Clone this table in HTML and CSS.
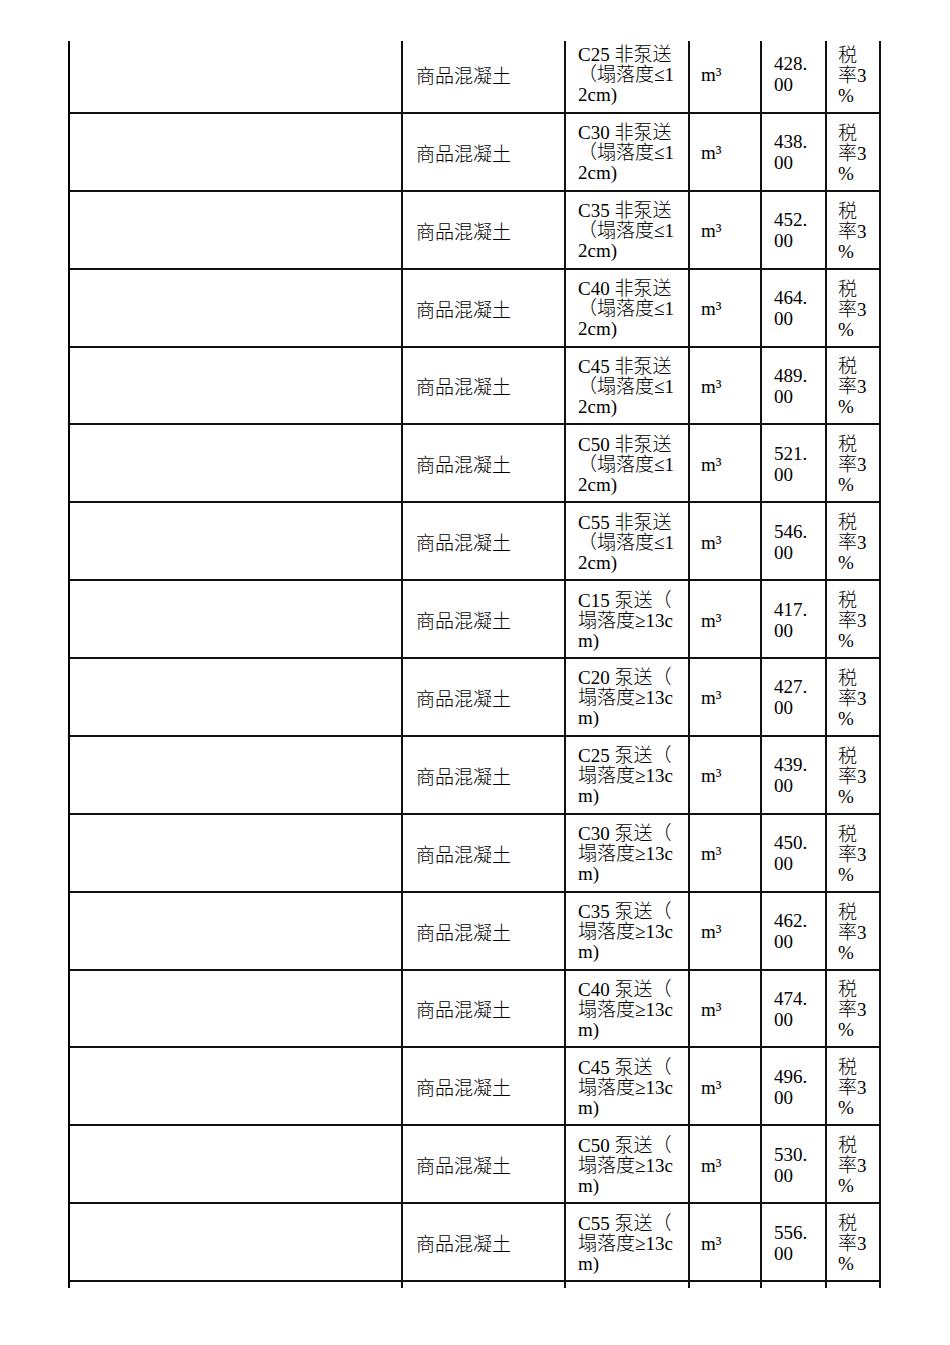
FILE: index.html
```html
<!DOCTYPE html>
<html lang="zh">
<head>
<meta charset="utf-8">
<title>商品混凝土</title>
<link rel="stylesheet" href="styles.css">
</head>
<body>
<div class="page">
  <div class="clip">
    <div class="grid">
      <div class="c c1"></div><div class="c c2">商品混凝土</div><div class="c c3"><div>C25 非泵送<br>（塌落度≤1<br>2cm)</div></div><div class="c c4">m³</div><div class="c c5"><div>428.<br>00</div></div><div class="c c6"><div>税<br>率3<br>%</div></div>
      <div class="c c1"></div><div class="c c2">商品混凝土</div><div class="c c3"><div>C30 非泵送<br>（塌落度≤1<br>2cm)</div></div><div class="c c4">m³</div><div class="c c5"><div>438.<br>00</div></div><div class="c c6"><div>税<br>率3<br>%</div></div>
      <div class="c c1"></div><div class="c c2">商品混凝土</div><div class="c c3"><div>C35 非泵送<br>（塌落度≤1<br>2cm)</div></div><div class="c c4">m³</div><div class="c c5"><div>452.<br>00</div></div><div class="c c6"><div>税<br>率3<br>%</div></div>
      <div class="c c1"></div><div class="c c2">商品混凝土</div><div class="c c3"><div>C40 非泵送<br>（塌落度≤1<br>2cm)</div></div><div class="c c4">m³</div><div class="c c5"><div>464.<br>00</div></div><div class="c c6"><div>税<br>率3<br>%</div></div>
      <div class="c c1"></div><div class="c c2">商品混凝土</div><div class="c c3"><div>C45 非泵送<br>（塌落度≤1<br>2cm)</div></div><div class="c c4">m³</div><div class="c c5"><div>489.<br>00</div></div><div class="c c6"><div>税<br>率3<br>%</div></div>
      <div class="c c1"></div><div class="c c2">商品混凝土</div><div class="c c3"><div>C50 非泵送<br>（塌落度≤1<br>2cm)</div></div><div class="c c4">m³</div><div class="c c5"><div>521.<br>00</div></div><div class="c c6"><div>税<br>率3<br>%</div></div>
      <div class="c c1"></div><div class="c c2">商品混凝土</div><div class="c c3"><div>C55 非泵送<br>（塌落度≤1<br>2cm)</div></div><div class="c c4">m³</div><div class="c c5"><div>546.<br>00</div></div><div class="c c6"><div>税<br>率3<br>%</div></div>
      <div class="c c1"></div><div class="c c2">商品混凝土</div><div class="c c3"><div>C15 泵送（<br>塌落度≥13c<br>m)</div></div><div class="c c4">m³</div><div class="c c5"><div>417.<br>00</div></div><div class="c c6"><div>税<br>率3<br>%</div></div>
      <div class="c c1"></div><div class="c c2">商品混凝土</div><div class="c c3"><div>C20 泵送（<br>塌落度≥13c<br>m)</div></div><div class="c c4">m³</div><div class="c c5"><div>427.<br>00</div></div><div class="c c6"><div>税<br>率3<br>%</div></div>
      <div class="c c1"></div><div class="c c2">商品混凝土</div><div class="c c3"><div>C25 泵送（<br>塌落度≥13c<br>m)</div></div><div class="c c4">m³</div><div class="c c5"><div>439.<br>00</div></div><div class="c c6"><div>税<br>率3<br>%</div></div>
      <div class="c c1"></div><div class="c c2">商品混凝土</div><div class="c c3"><div>C30 泵送（<br>塌落度≥13c<br>m)</div></div><div class="c c4">m³</div><div class="c c5"><div>450.<br>00</div></div><div class="c c6"><div>税<br>率3<br>%</div></div>
      <div class="c c1"></div><div class="c c2">商品混凝土</div><div class="c c3"><div>C35 泵送（<br>塌落度≥13c<br>m)</div></div><div class="c c4">m³</div><div class="c c5"><div>462.<br>00</div></div><div class="c c6"><div>税<br>率3<br>%</div></div>
      <div class="c c1"></div><div class="c c2">商品混凝土</div><div class="c c3"><div>C40 泵送（<br>塌落度≥13c<br>m)</div></div><div class="c c4">m³</div><div class="c c5"><div>474.<br>00</div></div><div class="c c6"><div>税<br>率3<br>%</div></div>
      <div class="c c1"></div><div class="c c2">商品混凝土</div><div class="c c3"><div>C45 泵送（<br>塌落度≥13c<br>m)</div></div><div class="c c4">m³</div><div class="c c5"><div>496.<br>00</div></div><div class="c c6"><div>税<br>率3<br>%</div></div>
      <div class="c c1"></div><div class="c c2">商品混凝土</div><div class="c c3"><div>C50 泵送（<br>塌落度≥13c<br>m)</div></div><div class="c c4">m³</div><div class="c c5"><div>530.<br>00</div></div><div class="c c6"><div>税<br>率3<br>%</div></div>
      <div class="c c1"></div><div class="c c2">商品混凝土</div><div class="c c3"><div>C55 泵送（<br>塌落度≥13c<br>m)</div></div><div class="c c4">m³</div><div class="c c5"><div>556.<br>00</div></div><div class="c c6"><div>税<br>率3<br>%</div></div>
      <div class="c c1"></div><div class="c c2"></div><div class="c c3"></div><div class="c c4"></div><div class="c c5"></div><div class="c c6"></div>
    </div>
  </div>
</div>
</body>
</html>
```
FILE: styles.css
```css
html, body {
  margin: 0;
  padding: 0;
  background: #fff;
}

.page {
  padding-top: 41px;
  padding-left: 68px;
  font-family: "Liberation Serif", "Noto Sans CJK SC", serif;
  font-size: 19px;
  font-weight: 300;
  line-height: 20px;
  color: #000;
}

.clip {
  width: 813px;
  height: 1247px;
  overflow: hidden;
}

.grid {
  margin-top: -5px;
  display: grid;
  grid-template-columns: 333px 163px 124px 72px 65px 54px;
  grid-auto-rows: 77.875px;
  border-left: 2px solid #000;
  width: 813px;
  box-sizing: border-box;
}

.c {
  box-sizing: border-box;
  border-right: 2px solid #111;
  border-bottom: 2px solid #111;
  display: flex;
  flex-direction: column;
  justify-content: center;
  padding: 3px 4px 0 12px;
  white-space: nowrap;
  overflow: hidden;
}

.c2 {
  padding-left: 13px;
  padding-top: 6px;
}

.c4 {
  padding-left: 11px;
}

.c5 {
  line-height: 21px;
  padding-left: 12px;
  padding-top: 1px;
}

.c6 {
  padding-left: 11px;
  padding-top: 4px;
}
```
